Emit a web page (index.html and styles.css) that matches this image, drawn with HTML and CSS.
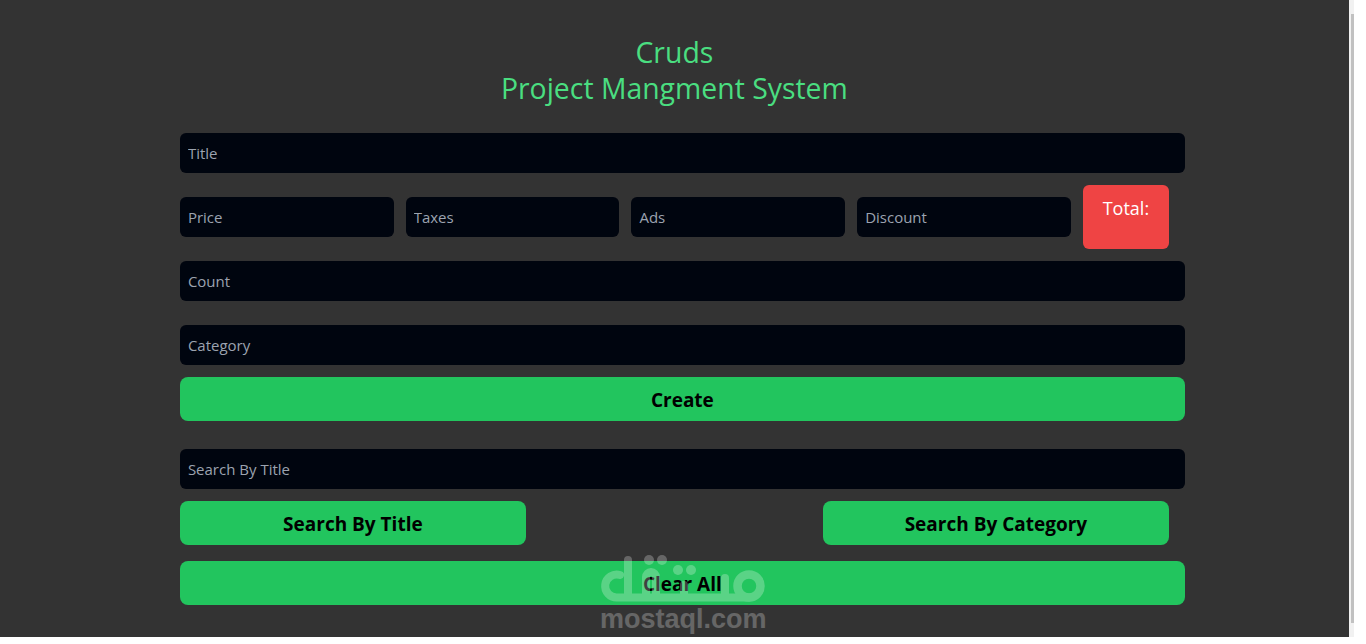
FILE: index.html
```html
<!DOCTYPE html>
<html lang="en">
<head>
<meta charset="utf-8">
<title>Cruds</title>
<link rel="stylesheet" href="styles.css">
</head>
<body>
<div class="frame">
  <main class="page">
    <div class="container">
      <header class="heading">
        <h1>Cruds</h1>
        <h2>Project Mangment System</h2>
      </header>
      <input class="field" placeholder="Title">
      <div class="price-row">
        <input class="field" placeholder="Price">
        <input class="field" placeholder="Taxes">
        <input class="field" placeholder="Ads">
        <input class="field" placeholder="Discount">
        <div class="total">Total:</div>
      </div>
      <input class="field" placeholder="Count">
      <input class="field category" placeholder="Category">
      <button class="btn create">Create</button>
      <input class="field search" placeholder="Search By Title">
      <div class="search-row">
        <button class="btn half">Search By Title</button>
        <button class="btn half">Search By Category</button>
      </div>
      <button class="btn clear">Clear All</button>
    </div>
  </main>
  <div class="scrollbar"><div class="thumb"></div></div>
  <div class="watermark">
    <svg class="logo" viewBox="0 0 166 54" width="166" height="54" aria-hidden="true">
      <path fill="none" stroke="#fff" stroke-width="8" stroke-linecap="round" stroke-linejoin="round" d="M20 23A11.500 11.500 0 1 0 17 45.500H149M28 8V45M46 45V25a5 5 0 0 1 10 0V45M84 33V45M125 26V45"/>
      <circle fill="none" stroke="#fff" stroke-width="8.500" cx="149" cy="34" r="11.500"/>
      <g fill="#fff">
        <circle cx="49" cy="8" r="5"/><circle cx="62" cy="8" r="5"/>
        <circle cx="78" cy="18" r="5"/><circle cx="91" cy="18" r="5"/>
      </g>
    </svg>
    <div class="domain">mostaql.com</div>
  </div>
</div>
</body>
</html>
```
FILE: styles.css
```css
* { box-sizing: content-box; }
html, body { margin: 0; background: #fff; }
body { font-family: "Open Sans", "Noto Sans", sans-serif; }
.frame {
  position: relative;
  display: flex;
  width: 1354px;
  height: 637px;
  overflow: hidden;
}
.page {
  flex: 1;
  background: #333;
  padding: 34px 0 0 179.9px;
}
.container { width: 989px; }
.heading {
  text-align: center;
  color: #4ade80;
  font-size: 28.4px;
  line-height: 36px;
  margin-bottom: 27px;
}
.heading h1, .heading h2 { margin: 0; font: inherit; }
.field {
  display: block;
  width: 100%;
  height: 40px;
  padding: 0 8px;
  border: 0;
  border-radius: 6px;
  background: #00050f;
  color: #fff;
  font: 15px/40px "Open Sans", "Noto Sans", sans-serif;
}
.field::placeholder { color: #9ca3af; opacity: 1; }
.price-row {
  display: flex;
  align-items: center;
  gap: 12px;
  margin-top: 12px;
  margin-bottom: 12px;
}
.price-row .field { flex: 1 1 0; width: auto; min-width: 0; box-sizing: border-box; }
.total {
  flex: 0 0 86px;
  height: 64px;
  border-radius: 6px;
  background: #ef4444;
  color: #fff;
  font-size: 18px;
  line-height: 28px;
  text-align: center;
  padding-top: 9px;
  box-sizing: border-box;
}
.category { margin-top: 24px; }
.btn {
  display: block;
  height: 44px;
  padding: 2px 0 0;
  box-sizing: border-box;
  border: 0;
  border-radius: 8px;
  background: #22c55e;
  color: #000;
  font: 700 19px/28px "Open Sans", "Noto Sans", sans-serif;
}
.create, .clear { width: 1005px; }
.create { margin-top: 12px; }
.search { margin-top: 28px; }
.search-row {
  display: flex;
  justify-content: space-between;
  margin-top: 12px;
}
.half { width: 346px; }
.clear { margin-top: 16px; }
.scrollbar {
  flex: 0 0 5px;
  background: #f1f1f1;
  padding-top: 14px;
}
.thumb { width: 3px; height: 609px; margin-left: 2px; background: #c1c1c1; }
.watermark {
  position: absolute;
  left: 600px;
  top: 552px;
  width: 166px;
  opacity: .25;
  pointer-events: none;
}
.logo { display: block; }
.domain {
  color: #fff;
  font: 700 27px/26px "Liberation Sans", sans-serif;
  text-align: center;
}
```
